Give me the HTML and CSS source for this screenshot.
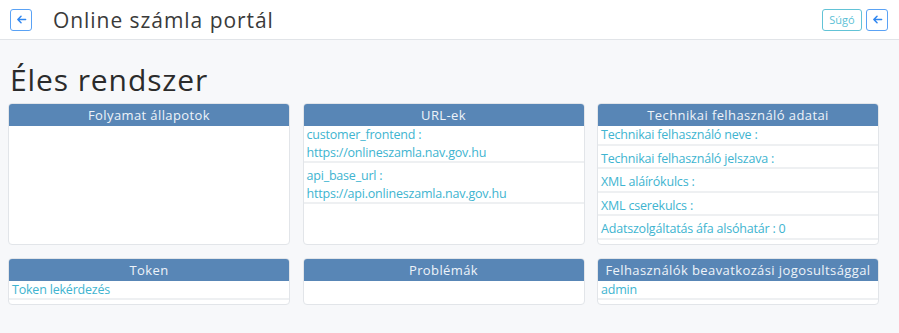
FILE: index.html
```html
<!DOCTYPE html>
<html lang="hu">
<head>
<meta charset="utf-8">
<title>Online számla portál</title>
<link rel="stylesheet" href="styles.css">
</head>
<body>
<header class="topbar">
  <div class="topbar-left">
    <button class="btn btn-back" aria-label="Vissza">
      <svg viewBox="0 0 12 12" width="11" height="11"><path d="M10.5 6H2M5.5 2.5L2 6l3.5 3.5" fill="none" stroke="#2f86f0" stroke-width="1.6" stroke-linecap="round" stroke-linejoin="round"/></svg>
    </button>
    <h1 class="app-title">Online számla portál</h1>
  </div>
  <div class="topbar-right">
    <button class="btn btn-help">Súgó</button>
    <button class="btn btn-back" aria-label="Vissza">
      <svg viewBox="0 0 12 12" width="11" height="11"><path d="M10.5 6H2M5.5 2.5L2 6l3.5 3.5" fill="none" stroke="#2f86f0" stroke-width="1.6" stroke-linecap="round" stroke-linejoin="round"/></svg>
    </button>
  </div>
</header>
<main class="content">
  <h2 class="page-title">Éles rendszer</h2>
  <div class="grid">
    <section class="card">
      <div class="card-head">Folyamat állapotok</div>
      <ul class="card-list"></ul>
    </section>
    <section class="card">
      <div class="card-head">URL-ek</div>
      <ul class="card-list">
        <li>customer_frontend :<br>https://onlineszamla.nav.gov.hu</li>
        <li>api_base_url :<br>https://api.onlineszamla.nav.gov.hu</li>
      </ul>
    </section>
    <section class="card">
      <div class="card-head">Technikai felhasználó adatai</div>
      <ul class="card-list">
        <li>Technikai felhasználó neve :</li>
        <li>Technikai felhasználó jelszava :</li>
        <li>XML aláírókulcs :</li>
        <li>XML cserekulcs :</li>
        <li>Adatszolgáltatás áfa alsóhatár : 0</li>
      </ul>
    </section>
    <section class="card">
      <div class="card-head">Token</div>
      <ul class="card-list">
        <li>Token lekérdezés</li>
      </ul>
    </section>
    <section class="card">
      <div class="card-head">Problémák</div>
      <ul class="card-list"></ul>
    </section>
    <section class="card">
      <div class="card-head">Felhasználók beavatkozási jogosultsággal</div>
      <ul class="card-list">
        <li>admin</li>
      </ul>
    </section>
  </div>
</main>
</body>
</html>
```
FILE: styles.css
```css
html, body {
  margin: 0;
  padding: 0;
}
body {
  background: #f7f8fa;
  font-family: "Open Sans", "DejaVu Sans", sans-serif;
  color: #333;
  width: 899px;
  height: 333px;
  overflow: hidden;
}
.topbar {
  height: 40px;
  background: #fff;
  border-bottom: 1px solid #e1e4e8;
  display: flex;
  align-items: center;
  justify-content: space-between;
  padding: 0 11px 0 10px;
  box-sizing: border-box;
}
.topbar-left, .topbar-right {
  display: flex;
  align-items: center;
}
.topbar-right {
  gap: 4px;
}
.btn {
  font-family: inherit;
  background: #fff;
  border-radius: 3px;
  padding: 0;
  height: 22px;
  box-sizing: border-box;
  display: flex;
  align-items: center;
  justify-content: center;
  cursor: pointer;
}
.btn-back {
  width: 22px;
  border: 1px solid #5aa2f5;
}
.btn-help {
  width: 40px;
  border: 1px solid #62c3d6;
  color: #5bbfd6;
  font-size: 11px;
}
.app-title {
  margin: 0 0 0 21px;
  font-size: 21px;
  font-weight: 400;
  color: #3a3a3a;
  letter-spacing: 0.95px;
}
.content {
  padding: 0 20px 0 8px;
}
.page-title {
  margin: 0;
  padding: 20px 0 0 2px;
  height: 63px;
  box-sizing: border-box;
  font-size: 30px;
  font-weight: 400;
  line-height: 40px;
  color: #2b2b2b;
  letter-spacing: 0.9px;
}
.grid {
  display: grid;
  grid-template-columns: repeat(3, 1fr);
  column-gap: 12.5px;
  row-gap: 13px;
}
.card {
  background: #fff;
  border: 1px solid #e2e5e9;
  border-radius: 4px;
  overflow: hidden;
  padding-bottom: 4px;
}
.card-head {
  background: #5886b6;
  color: #eef3f9;
  text-align: center;
  font-size: 13px;
  line-height: 22px;
  letter-spacing: 0.4px;
}
.card-list {
  list-style: none;
  margin: 0;
  padding: 0;
}
.card-list li {
  padding: 4px 4px 0 3px;
  font-size: 12.5px;
  line-height: 17.5px;
  color: #40b4d0;
  letter-spacing: -0.2px;
  border-bottom: 2px solid #eef0f2;
}
.card-list li:first-child {
  padding-top: 0;
}
```
